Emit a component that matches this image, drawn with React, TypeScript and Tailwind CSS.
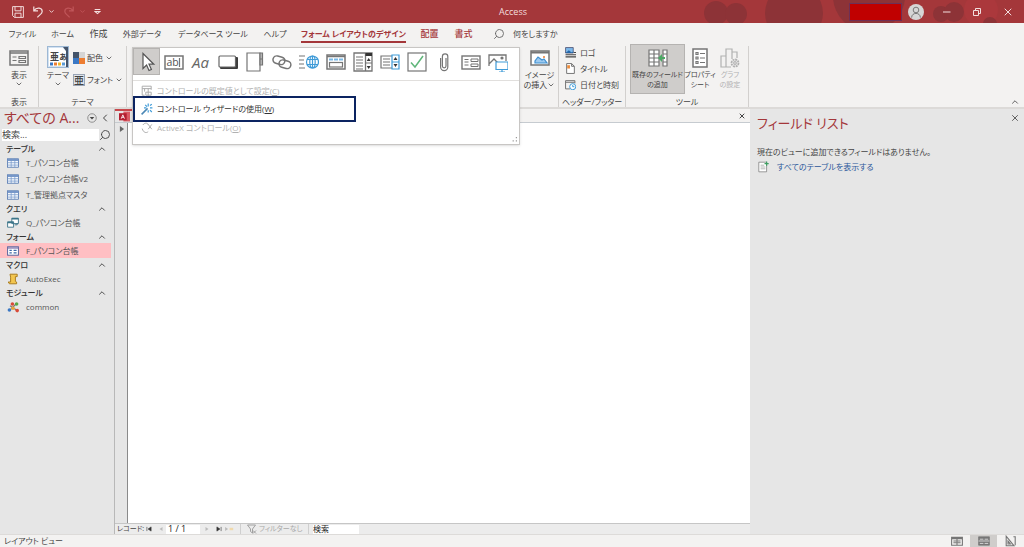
import type { ReactNode } from "react";
import { ChevronDown, ChevronLeft, ChevronUp, Search, X } from "lucide-react";

/* ---------- icons ---------- */

interface IconProps {
  children: ReactNode;
  className?: string;
  box?: string;
}

// Thin grey line drawing; size comes from className.
function Icon({ children, className = "size-5", box = "0 0 20 20" }: IconProps) {
  return (
    <svg
      viewBox={box}
      className={`shrink-0 ${className}`}
      fill="none"
      stroke="#757575"
      strokeWidth="1.2"
      aria-hidden="true"
    >
      {children}
    </svg>
  );
}

function Caret() {
  return <ChevronDown className="size-2 shrink-0 text-[#555]" strokeWidth={2.5} aria-hidden="true" />;
}

const CONTROLS: { name: string; art: ReactNode }[] = [
  {
    name: "選択",
    art: <path d="M6 1.5v15l3.6-3.4 2.4 5.4 2.4-1-2.4-5.3h4.8z" fill="#fff" stroke="#555" />,
  },
  {
    name: "テキスト ボックス",
    art: (
      <>
        <rect x="1" y="4" width="18" height="13" fill="#fff" strokeWidth="1.5" />
        <path d="M15.5 6v9" />
        <text x="2.5" y="14" fontSize="10.5" fill="#555" stroke="none">ab</text>
      </>
    ),
  },
  {
    name: "ラベル",
    art: (
      <text x="1" y="16" fontSize="15" fontStyle="italic" fill="#666" stroke="none">Aa</text>
    ),
  },
  {
    name: "ボタン",
    art: (
      <>
        <rect x="2" y="5" width="18" height="12" rx="1" fill="#3c3c3c" stroke="none" />
        <rect x="1" y="4" width="16.5" height="11" rx="1" fill="#fff" stroke="#666" />
      </>
    ),
  },
  {
    name: "タブ コントロール",
    art: (
      <>
        <path d="M2 1h13v18H2z" fill="#fff" />
        <path d="M15 1h2.500v6H15zM15 7h2.500v6H15z" fill="#bbb" />
      </>
    ),
  },
  {
    name: "リンク",
    art: (
      <g strokeWidth="1.5">
        <rect x="1" y="4.500" width="12" height="7.500" rx="3.700" transform="rotate(15 7 8)" />
        <rect x="7" y="8.500" width="12" height="7.500" rx="3.700" transform="rotate(15 13 12)" />
      </g>
    ),
  },
  {
    name: "Web ブラウザー",
    art: (
      <>
        <path d="M0 4h6M0 8h5M0 12h5M0 16h6" />
        <g stroke="#3f9bd8">
          <circle cx="13.500" cy="10" r="6" />
          <ellipse cx="13.500" cy="10" rx="2.700" ry="6" />
          <path d="M8 7.500h11M8 12.500h11M13.500 4v12" />
        </g>
      </>
    ),
  },
  {
    name: "ナビゲーション",
    art: (
      <>
        <rect x="1" y="3" width="18" height="14" fill="#fff" strokeWidth="1.500" />
        <path d="M1 4.500h18" strokeWidth="1.500" />
        <path d="M3 7.500h4M8 7.500h4M13 7.500h4" stroke="#78b8e6" strokeWidth="2" />
        <rect x="3.500" y="10.500" width="13" height="4.500" />
      </>
    ),
  },
  {
    name: "コンボ ボックス",
    art: (
      <>
        <path d="M1 1h18v18H1zM12.500 1v18" fill="#fff" strokeWidth="1.300" />
        <path d="M12.500 2.500h6.500" stroke="#333" strokeWidth="3" />
        <path d="M3 5h7M3 8h7M3 11h7M3 14h7M3 17h7M12.500 11h6.500" />
        <path d="M13.700 9h4l-2-3zM13.700 14h4l-2 3z" fill="#333" stroke="none" />
      </>
    ),
  },
  {
    name: "リスト ボックス",
    art: (
      <>
        <path d="M12 4H1v12h11M3 7h7M3 10h7M3 13h7" />
        <path d="M12 3h7v14h-7zM12 10h7" stroke="#3f9bd8" />
        <path d="M13.500 8h4l-2-3zM13.500 12h4l-2 3z" fill="#333" stroke="none" />
      </>
    ),
  },
  {
    name: "チェック ボックス",
    art: (
      <>
        <rect x="1" y="1" width="18" height="18" fill="#fff" />
        <path d="M4 10.500l4 4.500 8-11" stroke="#5fb67a" strokeWidth="1.500" />
      </>
    ),
  },
  {
    name: "添付ファイル",
    art: (
      <path d="M12 6v8a1.800 1.800 0 0 1-3.600 0V4.500a2.700 2.700 0 0 1 5.400 0V15a3.600 3.600 0 0 1-7.200 0V6" />
    ),
  },
  {
    name: "オプション グループ",
    art: (
      <>
        <rect x="1" y="4" width="18" height="13" fill="#fff" strokeWidth="1.400" />
        <path d="M3.500 7.500h4M3.500 10h4M3.500 13h4M10 7h7v2.500h-7zM10 12h7v2.500h-7z" strokeWidth="1" />
      </>
    ),
  },
  {
    name: "イメージ",
    art: (
      <>
        <path d="M1 14V3h17v6M1 12l5-5 4 4" strokeWidth="1.300" />
        <circle cx="14" cy="6" r="1" fill="#555" />
        <path d="M8 10h12v7.500H8zM14 17.500v2.500M11 20h6" fill="#fff" stroke="#3f9bd8" />
      </>
    ),
  },
];

function WandIcon() {
  return (
    <Icon className="size-3">
      <path d="M1 19L11 9" stroke="#4b87b5" strokeWidth="2.500" />
      <path d="M12 1v5M12 12v4M5 8h4M15 8h4M15 4l3-2M15 12l3 3M7 3l3 3" stroke="#3f9bd8" strokeWidth="2" />
    </Icon>
  );
}

/* ---------- title bar ---------- */

function TitleBar() {
  return (
    <header className="relative flex h-[23px] shrink-0 items-center overflow-hidden bg-[#a4373a] text-[#f3dede]">
      <svg className="absolute right-0 top-0 h-[23px] w-[360px]" viewBox="0 0 360 23" aria-hidden="true">
        <g fill="#8d3337">
          <circle cx="52" cy="13" r="12" />
          <circle cx="72" cy="14" r="11" />
          <circle cx="130" cy="13" r="29" />
          <circle cx="205" cy="-4" r="36" />
          <circle cx="277" cy="14" r="8" />
          <circle cx="290" cy="12" r="10" />
        </g>
        <circle cx="317" cy="10" r="17" fill="#ab383c" />
        <circle cx="326" cy="24" r="7" fill="#8d3337" />
      </svg>
      <div className="relative flex flex-1 items-center gap-2 pl-3">
        <button aria-label="上書き保存">
          <Icon className="size-3">
            <path d="M1 1h18v18H4l-3-3zM5 1v7h10V1M5 19v-7h10v7" stroke="#f3dede" strokeWidth="1.600" />
          </Icon>
        </button>
        <button aria-label="元に戻す" className="flex items-center gap-1">
          <Icon className="size-3">
            <path d="M3 1v7h7M3 8c5-7 14-5 14 1 0 4-5 6-8 10" stroke="#f3dede" strokeWidth="2" />
          </Icon>
          <ChevronDown className="size-[7px]" strokeWidth={3} />
        </button>
        <button aria-label="やり直し" className="flex items-center gap-1 text-[#c0565a]">
          <Icon className="size-3">
            <path d="M17 1v7h-7M17 8C12 1 3 3 3 9c0 4 5 6 8 10" stroke="#c0565a" strokeWidth="2" />
          </Icon>
          <ChevronDown className="size-[7px]" strokeWidth={3} />
        </button>
        <button aria-label="クイック アクセスのカスタマイズ">
          <Icon className="size-[7px]">
            <path d="M2 4h16M3 10l7 6 7-6z" stroke="#f3dede" strokeWidth="3" />
          </Icon>
        </button>
      </div>
      <h1 className="relative text-[9px]">Access</h1>
      <div className="relative flex flex-1 items-center justify-end pr-2.5">
        <span className="h-[18px] w-[53px] border border-[#6d2f57] bg-[#c00000]" />
        <button aria-label="アカウント" className="ml-1.5 mr-[18px]">
          <Icon className="size-4 rounded-full bg-[#d6d6d6]">
            <circle cx="10" cy="7.500" r="3.500" />
            <path d="M4.500 17c0-7 11-7 11 0" />
          </Icon>
        </button>
        <button aria-label="最小化" className="mr-5">
          <Icon className="size-2.5"><path d="M2 10h15" stroke="#f3dede" strokeWidth="2" /></Icon>
        </button>
        <button aria-label="元に戻す (縮小)" className="mr-5">
          <Icon className="size-2.5">
            <path d="M3 7h10v10H3zM7 7V3h10v10h-4" stroke="#f3dede" strokeWidth="2" />
          </Icon>
        </button>
        <button aria-label="閉じる"><X className="size-3" /></button>
      </div>
    </header>
  );
}

/* ---------- ribbon ---------- */

function TabRow() {
  return (
    <nav aria-label="リボン" className="flex h-[21px] shrink-0 items-center whitespace-nowrap pl-[5px] text-[8px] text-[#444]">
      <button className="w-[35px]">ファイル</button>
      <button className="w-[45px]">ホーム</button>
      <button className="w-[27px] text-[9px]">作成</button>
      <button className="w-[60px]">外部データ</button>
      <button className="w-[82px]">データベース ツール</button>
      <button className="w-[42px]">ヘルプ</button>
      <button className="flex w-[115px] justify-center pt-1 font-bold text-[#a4373a]">
        <span className="border-b-2 border-[#a4373a] pb-px">フォーム レイアウトのデザイン</span>
      </button>
      <button className="w-[37px] text-[9px] font-medium text-[#a4373a]">配置</button>
      <button className="w-[31px] text-[9px] font-medium text-[#a4373a]">書式</button>
      <button className="ml-3.5 flex items-center gap-2">
        <Search className="size-3 -scale-x-100 text-[#666]" strokeWidth={1.8} aria-hidden="true" />
        何をしますか
      </button>
    </nav>
  );
}

function Group({ label, className, children }: { label: string; className: string; children: ReactNode }) {
  return (
    <section
      aria-label={label}
      className={`flex shrink-0 flex-col justify-between border-r border-[#d2d0ce] text-center ${className}`}
    >
      {children}
      <div className="leading-[10px]">{label}</div>
    </section>
  );
}

function ControlsMenu() {
  return (
    <div className="absolute left-[5px] top-px z-10 flex h-[98px] w-[388px] flex-col border border-[#c8c6c4] bg-white shadow-sm">
      <div className="flex h-[33px] shrink-0 items-start border-b border-[#e1dfdd]">
        {CONTROLS.map((c, i) => (
          <button
            key={c.name}
            aria-label={c.name}
            className={`flex h-[27px] w-[27px] shrink-0 items-center justify-center ${
              i === 0 ? "border border-[#b5b3b1] bg-[#cfcdcb]" : ""
            }`}
          >
            <Icon>{c.art}</Icon>
          </button>
        ))}
      </div>
      <button disabled className="flex h-[15px] shrink-0 items-center gap-1 pl-2 pt-1 text-[#b1b1b1]">
        <Icon className="size-3">
          <path d="M17 8V2H2v15h4M2 6h15M6 6v5M12 6v13M8 12h9v5H8z" stroke="#aaa" strokeWidth="1.600" />
        </Icon>
        <span>コントロールの既定値として設定(<u>C</u>)</span>
      </button>
      <button className="flex h-[26px] w-[223px] shrink-0 items-center gap-1 border-2 border-[#0c2461] pl-1.5 text-[#333]">
        <WandIcon />
        <span>コントロール ウィザードの使用(<u>W</u>)</span>
      </button>
      <button disabled className="flex h-3 shrink-0 items-center gap-1 pl-2 text-[#b1b1b1]">
        <Icon className="size-3">
          <path d="M3 5c4-5 9-3 9 0M2 11c2 7 7 8 10 5M12 4l6 8M18 4l-6 8" stroke="#aaa" strokeWidth="1.600" />
        </Icon>
        <span>ActiveX コントロール(<u>O</u>)</span>
      </button>
      <Icon className="mt-auto size-2 self-end">
        <path d="M12 4h3M12 12h3M4 12h3" stroke="#999" strokeWidth="3" />
      </Icon>
    </div>
  );
}

function Ribbon() {
  return (
    <div className="flex h-[65px] shrink-0 whitespace-nowrap border-b-2 border-[#dcdad8] pt-0.5 text-[8px] leading-[10px] text-[#444]">
      <Group label="表示" className="w-[39px]">
        <button className="flex flex-col items-center pt-0.5">
          <Icon>
            <rect x="1" y="3" width="18" height="14" strokeWidth="1.500" />
            <path d="M1 5h18" strokeWidth="1.500" />
            <path d="M3.500 9h4M3.500 12.500h4M10 8.500h6.500v2H10zM10 12.500h6.500v2H10z" />
          </Icon>
          <span className="mt-0.5">表示</span>
          <Caret />
        </button>
      </Group>
      <Group label="テーマ" className="w-[88px]">
        <div className="flex pl-2">
          <button className="flex w-[22px] flex-col items-center">
            <Icon className="size-[22px] border border-[#9db8d4] bg-[#d3e2f2]">
              <path d="M1 1h14l4 4v14H1z" fill="#fff" stroke="none" />
              <path d="M15 0h5v20h-2V4z" fill="#44546a" stroke="none" />
              <text x="2" y="13" fontSize="9" fontWeight="bold" fill="#444" stroke="none">亜ぁ</text>
              <path d="M2 17h3" stroke="#3b78c4" strokeWidth="3" />
              <path d="M6 17h3" stroke="#ed7d31" strokeWidth="3" />
              <path d="M10 17h3" stroke="#f1b52a" strokeWidth="3" />
              <path d="M14 17h3" stroke="#5b9bd5" strokeWidth="3" />
            </Icon>
            <span className="mt-0.5">テーマ</span>
            <Caret />
          </button>
          <div className="ml-1 flex flex-col gap-2.5 pt-1.5">
            <button className="flex items-center gap-0.5">
              <Icon className="size-3">
                <path d="M0 0h10v10H0z" fill="#44546a" stroke="none" />
                <path d="M10 0h10v10H10z" fill="#d5d5d5" stroke="none" />
                <path d="M0 10h10v10H0z" fill="#3b78c4" stroke="none" />
                <path d="M10 10h10v10H10z" fill="#ed7d31" stroke="none" />
              </Icon>
              配色 <Caret />
            </button>
            <button className="flex items-center gap-0.5">
              <span className="flex size-3 items-center justify-center border border-[#9aa5b5] bg-[#dfe5ec] text-[10px] font-medium">亜</span>
              フォント <Caret />
            </button>
          </div>
        </div>
      </Group>
      <div className="relative w-[394px] shrink-0">
        <ControlsMenu />
      </div>
      <section className="flex w-[38px] shrink-0 justify-center border-r border-[#d2d0ce]">
        <button className="flex flex-col items-center self-start pt-0.5">
          <Icon>
            <rect x="1" y="3" width="18" height="14" fill="#fff" strokeWidth="1.500" />
            <path d="M1 4.500h18" strokeWidth="2" />
            <path d="M5 15v-2l3-4 4 3 2-1 3 4z" fill="#9dcaf0" stroke="#3f8fd0" />
            <circle cx="14" cy="9" r="1" fill="#ed7d31" stroke="none" />
          </Icon>
          <span className="mt-0.5">イメージ</span>
          <span className="flex items-center">の挿入 <Caret /></span>
        </button>
      </section>
      <Group label="ヘッダー/フッター" className="w-[67px]">
        <div className="flex flex-col gap-[5px] pl-1.5 pt-px">
          <button className="flex items-center gap-1">
            <Icon className="size-[11px]">
              <path d="M1 1h14v10H1z" fill="#7db8ea" stroke="#335" />
              <path d="M1 11l6-5 5 4 3-2v3z" fill="#2567a8" stroke="none" />
              <path d="M16 10h4M1 14h19M1 18h19" strokeWidth="2" stroke="#444" />
            </Icon>
            ロゴ
          </button>
          <button className="flex items-center gap-1">
            <Icon className="size-[11px]">
              <path d="M3 1h9l5 5v13H3zM12 1v5h5" fill="#fff" strokeWidth="1.800" />
              <path d="M4 4h5v6H4z" fill="#ed8b3a" stroke="none" />
            </Icon>
            タイトル
          </button>
          <button className="flex items-center gap-1">
            <Icon className="size-[11px]">
              <path d="M9 18H1V3h17v5M1 6h17" strokeWidth="1.800" />
              <circle cx="14" cy="14" r="5.500" fill="#fff" stroke="#3f9bd8" strokeWidth="1.800" />
              <path d="M14 11v3h3" stroke="#3f9bd8" strokeWidth="1.800" />
            </Icon>
            日付と時刻
          </button>
        </div>
      </Group>
      <Group label="ツール" className="w-[123px]">
        <div className="-mt-0.5 flex pl-1 text-[7px]">
          <button aria-pressed="true" className="flex h-[50px] w-[55px] shrink-0 flex-col items-center border border-[#b5b3b1] bg-[#cfcdcb] pt-[3px]">
            <Icon>
              <path d="M1 2h10v16H1zM1 6h10M1 10h10M1 14h10M6 2v16M15 2h4v16h-4zM15 6h4M15 14h4" fill="#fff" />
              <path d="M10 10l4-4v3h3v2h-3v3z" fill="#4ca864" stroke="none" />
            </Icon>
            <span className="mt-0.5">既存のフィールド<br />の追加</span>
          </button>
          <button className="flex w-[30px] flex-col items-center pt-1">
            <Icon>
              <rect x="3" y="1" width="14" height="18" fill="#fff" strokeWidth="1.500" />
              <path d="M6 4.500h2v2H6zM6 9h2v2H6zM6 13.500h2v2H6zM10 5.500h5M10 10h5M10 14.500h5" />
            </Icon>
            <span className="mt-0.5">プロパティ<br />シート</span>
          </button>
          <button disabled className="flex w-[30px] flex-col items-center pt-1 text-[#b1b1b1]">
            <Icon>
              <path d="M1 19V8h5v11zM6 19V1h6v10M12 4h5v6M6 19h5" stroke="#b1b1b1" />
              <circle cx="15" cy="15" r="3.500" stroke="#b1b1b1" strokeWidth="1.800" strokeDasharray="2 0.700" />
              <circle cx="15" cy="15" r="1.300" stroke="#b1b1b1" />
            </Icon>
            <span className="mt-0.5">グラフ<br />の設定</span>
          </button>
        </div>
      </Group>
      <button aria-label="リボンを折りたたむ" className="ml-auto mr-1 self-end">
        <ChevronUp className="size-2.5" strokeWidth={2} />
      </button>
    </div>
  );
}

/* ---------- navigation pane ---------- */

type Kind = "table" | "query" | "form" | "macro" | "module";

const KIND_ART: Record<Kind, ReactNode> = {
  table: (
    <>
      <rect x="1" y="3" width="18" height="14" fill="#f4f8fd" stroke="#3d67a8" />
      <path d="M1 5h18" stroke="#6d8fc4" strokeWidth="3" />
      <path d="M7 3v14M13 3v14M1 9.500h18M1 13.500h18" stroke="#7397c9" />
    </>
  ),
  query: (
    <g stroke="#3b7489">
      <path d="M8 2h11v9H8zM1 8h10v9H1z" fill="#fff" strokeWidth="1.500" />
      <path d="M8 3h11M1 9h10" strokeWidth="2.500" />
      <path d="M13 13h4v-3" strokeWidth="1.500" />
    </g>
  ),
  form: (
    <>
      <rect x="1" y="3" width="18" height="14" fill="#fff" stroke="#55609b" strokeWidth="1.600" />
      <path d="M1 5h18" stroke="#7d6da8" strokeWidth="2" />
      <path d="M4 9h4M4 13h4M11 9h5M11 13h5" stroke="#3d67a8" strokeWidth="2" />
    </>
  ),
  macro: (
    <path d="M5 2h12v4h-3v8l2 1v3H4l-2-3h4V7z" fill="#f3c64f" stroke="#a87b1d" strokeWidth="1.600" />
  ),
  module: (
    <>
      <path d="M4 16l11-11M5 8l12 8" stroke="#777" strokeWidth="2" />
      <circle cx="9" cy="5" r="3" fill="#d94a38" stroke="none" />
      <circle cx="16" cy="5" r="3" fill="#58a846" stroke="none" />
      <circle cx="4" cy="15" r="3" fill="#3b78c4" stroke="none" />
      <circle cx="10" cy="12" r="3" fill="#e8a33a" stroke="none" />
      <circle cx="17" cy="16" r="3" fill="#d94a38" stroke="none" />
    </>
  ),
};

const NAV: { title: string; kind: Kind; items: string[] }[] = [
  { title: "テーブル", kind: "table", items: ["T_パソコン台帳", "T_パソコン台帳V2", "T_管理拠点マスタ"] },
  { title: "クエリ", kind: "query", items: ["Q_パソコン台帳"] },
  { title: "フォーム", kind: "form", items: ["F_パソコン台帳"] },
  { title: "マクロ", kind: "macro", items: ["AutoExec"] },
  { title: "モジュール", kind: "module", items: ["common"] },
];

const SELECTED = "F_パソコン台帳";

function NavPane() {
  return (
    <aside className="w-[115px] shrink-0 border-r border-[#b8b8b8] bg-[#e6e6e6] pr-[3px]">
      <div className="flex h-[18px] items-center whitespace-nowrap pl-1 text-[#a4373a]">
        <h2 className="flex-1 text-[14px] leading-[18px]">すべての A...</h2>
        <button aria-label="メニュー">
          <Icon className="size-2.5">
            <circle cx="10" cy="10" r="8.500" strokeWidth="1.500" />
            <path d="M5.500 8h9L10 13z" fill="#444" stroke="none" />
          </Icon>
        </button>
        <button aria-label="閉じる" className="ml-0.5"><ChevronLeft className="size-3 text-[#444]" /></button>
      </div>
      <div className="ml-0.5 mt-px flex h-[14px] items-center">
        <input
          aria-label="検索"
          placeholder="検索..."
          className="h-3 min-w-0 flex-1 bg-white text-[9px] placeholder:text-[#444]"
        />
        <button aria-label="検索を実行">
          <Search className="size-3 -scale-x-100 text-[#444]" strokeWidth={1.800} />
        </button>
      </div>
      {NAV.map((s) => (
        <section key={s.title}>
          <button className="flex h-[13px] w-full items-center justify-between pl-1.5 pr-1 text-[8px] font-medium text-[#333]">
            {s.title}
            <ChevronUp className="size-2.5" strokeWidth={2} aria-hidden="true" />
          </button>
          <ul className="flex flex-col gap-px text-[8px] text-[#555]">
            {s.items.map((item) => (
              <li
                key={item}
                className={`flex h-[15px] items-center gap-[7px] whitespace-nowrap pl-[7px] ${
                  item === SELECTED ? "bg-[#ffbfc3]" : ""
                }`}
              >
                <Icon className="size-3">{KIND_ART[s.kind]}</Icon>
                {item}
              </li>
            ))}
          </ul>
        </section>
      ))}
    </aside>
  );
}

/* ---------- document ---------- */

function RecordBar() {
  return (
    <div className="flex h-[11px] shrink-0 items-center whitespace-nowrap border-t border-[#c6c6c6] bg-[#ececec] text-[7px] leading-[10px] text-[#444]">
      <span className="w-[31px] pl-0.5">レコード:</span>
      <button aria-label="先頭レコード" className="w-3">
        <Icon className="size-1.5"><path d="M3 3v14M17 3L7 10l10 7z" fill="#333" stroke="#333" strokeWidth="2" /></Icon>
      </button>
      <button aria-label="前のレコード" className="w-2">
        <Icon className="size-1.5"><path d="M15 3L5 10l10 7z" fill="#bbb" stroke="none" /></Icon>
      </button>
      <input aria-label="現在のレコード" defaultValue="1 / 1" className="h-[9px] w-[34px] bg-white px-0.5 text-[9px] text-[#222]" />
      <button aria-label="次のレコード" className="ml-1 w-3">
        <Icon className="size-1.5"><path d="M5 3l10 7-10 7z" fill="#bbb" stroke="none" /></Icon>
      </button>
      <button aria-label="最終レコード" className="w-2">
        <Icon className="size-1.5"><path d="M17 3v14M3 3l10 7-10 7z" fill="#333" stroke="#333" strokeWidth="2" /></Icon>
      </button>
      <button aria-label="新しいレコード" className="w-4 text-left">
        <Icon className="h-1.5 w-2.5" box="0 0 32 20">
          <path d="M3 3l10 7-10 7z" fill="#bbb" stroke="none" />
          <path d="M18 10h12" stroke="#f0d9ac" strokeWidth="8" />
        </Icon>
      </button>
      <button disabled className="flex w-[69px] items-center gap-0.5 border-x border-[#cfcfcf] pl-1.5 text-[#aaa]">
        <Icon className="size-2.5">
          <path d="M1 2h16l-6 8v8l-4-3v-5zM12 13l6 6M18 13l-6 6" strokeWidth="1.800" stroke="#999" />
        </Icon>
        フィルターなし
      </button>
      <input aria-label="レコードの検索" defaultValue="検索" className="ml-1 h-[9px] w-[46px] bg-white text-[8px] text-[#222]" />
    </div>
  );
}

function DocumentArea() {
  return (
    <main className="flex min-w-0 flex-1 flex-col">
      <div className="flex h-[14px] shrink-0 items-center justify-between border-b border-[#c6cbd0] bg-[#f3f2f1] pr-1">
        <span className="flex h-full w-10 items-center border-t-2 border-[#c8484c] bg-[#e6e6e6] pl-1">
          <Icon className="size-[11px]">
            <path d="M8 1h12v18H8z" fill="#d95a63" stroke="none" />
            <path d="M0 4h14v13H0z" fill="#b41f30" stroke="none" />
            <path d="M4 14l3-7 3 7M5 11.500h4" stroke="#fff" strokeWidth="1.500" />
          </Icon>
        </span>
        <button aria-label="フォームを閉じる"><X className="size-2 text-[#444]" strokeWidth={3} /></button>
      </div>
      <div className="flex flex-1">
        <div className="w-[13px] border-r border-[#8a8a8a] bg-[#e6e6e6] pl-1 pt-[3px]">
          <Icon className="size-1.5"><path d="M3 0l14 10L3 20z" fill="#666" stroke="none" /></Icon>
        </div>
        <div className="flex-1 bg-white" />
      </div>
      <RecordBar />
    </main>
  );
}

function FieldList() {
  return (
    <aside className="w-[274px] shrink-0 bg-[#e6e6e6] pl-[7px] text-[8px] text-[#444]">
      <div className="flex h-[32px] items-start justify-between pr-1 pt-1">
        <h2 className="text-[13px] leading-5 text-[#a4373a]">フィールド リスト</h2>
        <button aria-label="閉じる"><X className="size-2.5" strokeWidth={2} /></button>
      </div>
      <p className="mt-1 leading-3.5">現在のビューに追加できるフィールドはありません。</p>
      <a href="#tables" className="mt-px flex items-center gap-2 leading-3.5 text-[#2b579a]">
        <Icon className="size-3">
          <path d="M3 2h13v16H3z" fill="#fff" />
          <path d="M6 7h6M6 10h8M6 13h8" stroke="#999" />
          <path d="M16 1v7M12.500 4.500h7" stroke="#3f9f63" strokeWidth="2" />
        </Icon>
        すべてのテーブルを表示する
      </a>
    </aside>
  );
}

function StatusBar() {
  return (
    <footer className="flex h-[13px] shrink-0 items-center border-t border-[#dddbd9] text-[8px] leading-3 text-[#444]">
      <span className="flex-1 pl-1">レイアウト ビュー</span>
      <button aria-label="フォーム ビュー" className="flex w-[26px] justify-center">
        <Icon className="size-3">
          <path d="M1 4h18v13H1zM1 6h18M4 10h5M4 13h5M11 10h5M11 13h5M10 6v11" strokeWidth="1.800" />
        </Icon>
      </button>
      <button aria-label="レイアウト ビュー" className="flex w-[27px] justify-center bg-[#cfcdcb]">
        <Icon className="size-3">
          <path d="M1 3h18v14H1z" fill="#777" />
          <path d="M3 7h6M11 7h6M1 10h18M3 14h6M11 14h6" stroke="#ddd" strokeWidth="1.500" />
        </Icon>
      </button>
      <button aria-label="デザイン ビュー" className="flex w-[27px] justify-center">
        <Icon className="size-3">
          <path d="M2 2v16h13zM5 10v5h4zM17 2v15M14 3h4" strokeWidth="1.800" />
        </Icon>
      </button>
    </footer>
  );
}

export default function App() {
  return (
    <div
      lang="ja"
      className="flex h-screen flex-col overflow-hidden bg-[#f3f2f1] font-['Open_Sans','Noto_Sans_CJK_JP',sans-serif] [font-feature-settings:'palt']"
    >
      <TitleBar />
      <TabRow />
      <Ribbon />
      <div className="flex min-h-0 flex-1">
        <NavPane />
        <DocumentArea />
        <FieldList />
      </div>
      <StatusBar />
    </div>
  );
}
